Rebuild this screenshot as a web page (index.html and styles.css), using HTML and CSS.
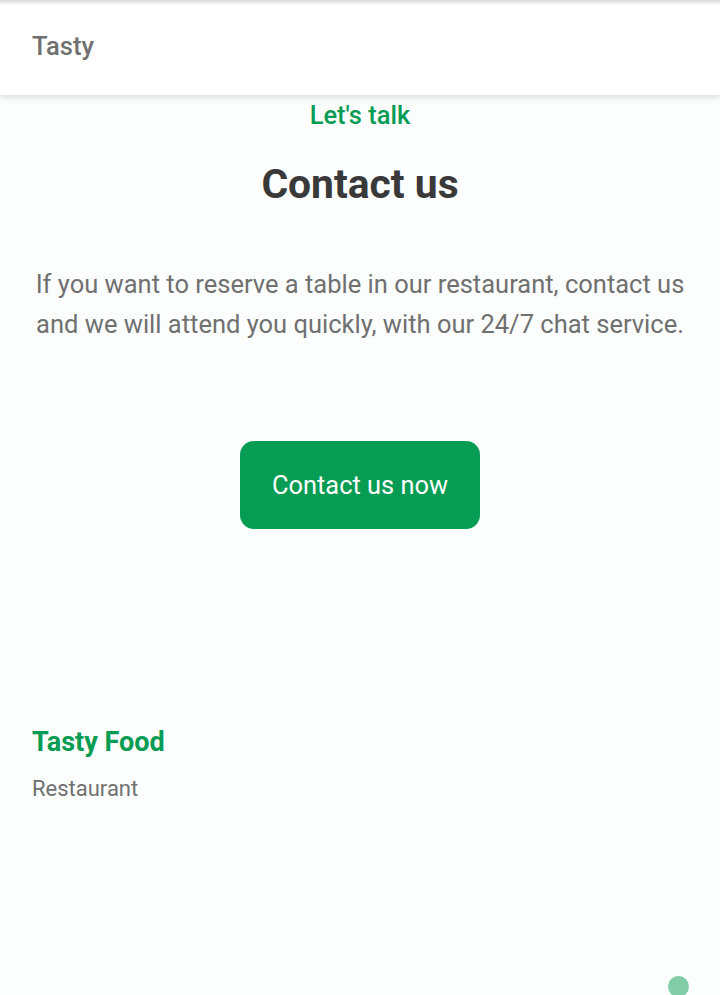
FILE: index.html
```html
<!DOCTYPE html>
<html lang="en">
<head>
<meta charset="utf-8">
<title>Tasty</title>
<link rel="stylesheet" href="styles.css">
</head>
<body>
<header class="header">
  <a class="logo" href="#">Tasty</a>
</header>
<main>
  <section class="contact">
    <span class="subtitle">Let's talk</span>
    <h2 class="title">Contact us</h2>
    <p class="desc">If you want to reserve a table in our restaurant, contact us and we will attend you quickly, with our 24/7 chat service.</p>
    <a class="button" href="#">Contact us now</a>
  </section>
  <footer class="footer">
    <div class="footer-brand">Tasty Food</div>
    <div class="footer-sub">Restaurant</div>
  </footer>
</main>
<span class="scrolltop"></span>
</body>
</html>
```
FILE: styles.css
```css
* { box-sizing: border-box; margin: 0; padding: 0; }
html, body { height: 100%; }
body {
  font-family: Roboto, "Noto Sans", sans-serif;
  background: #fbfefd;
  color: #707070;
  overflow: hidden;
  position: relative;
}
a { text-decoration: none; }
.header {
  height: 95px;
  background: #ffffff;
  display: flex;
  align-items: center;
  padding: 0 32px 4px;
  box-shadow: 0 3px 6px rgba(0,0,0,0.12), inset 0 5px 4px -3px rgba(0,0,0,0.18);
  position: relative;
  z-index: 2;
}
.logo {
  color: #707070;
  font-size: 25.6px;
  font-weight: 500;
}
.contact {
  display: flex;
  flex-direction: column;
  align-items: center;
  text-align: center;
  padding: 0 32px;
}
.subtitle {
  color: #069c54;
  font-size: 25.5px;
  font-weight: 500;
  line-height: 40px;
}
.title {
  color: #393939;
  font-size: 40.8px;
  font-weight: 700;
  line-height: 56px;
  margin-top: 21px;
}
.desc {
  font-size: 25.5px;
  line-height: 40px;
  margin-top: 52px;
  max-width: 656px;
}
.button {
  margin-top: 97px;
  width: 240px;
  height: 88px;
  border-radius: 14px;
  background: #069c54;
  color: #ffffff;
  font-size: 25.4px;
  display: flex;
  align-items: center;
  justify-content: center;
}
.footer {
  padding: 0 32px;
  margin-top: 193px;
}
.footer-brand {
  color: #069c54;
  font-size: 27px;
  font-weight: 700;
  line-height: 40px;
}
.footer-sub {
  font-size: 22px;
  line-height: 32px;
  margin-top: 11px;
}
.scrolltop {
  position: absolute;
  left: 668px;
  top: 976px;
  width: 21px;
  height: 21px;
  border-radius: 50%;
  background: #82cda8;
}
```
